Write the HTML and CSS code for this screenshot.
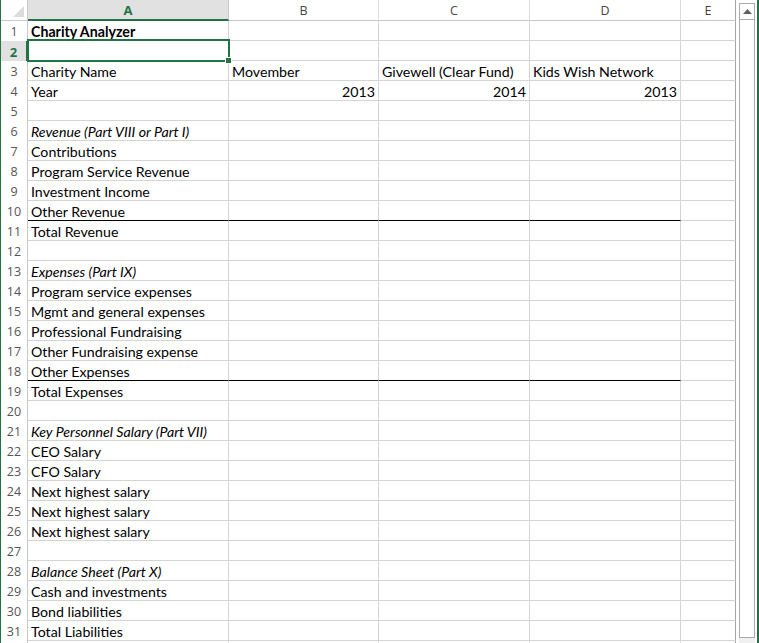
FILE: index.html
```html
<!DOCTYPE html>
<html>
<head>
<meta charset="utf-8">
<link rel="stylesheet" href="styles.css">
</head>
<body>
<div class="app">
  <div class="edge"></div>
  <div class="sheet">
    <div class="row head">
      <div class="corner"><svg width="26" height="20" viewBox="0 0 26 20"><polygon points="12,17 23,17 23,6" fill="#dcdcdc"/></svg></div>
      <div class="ch sel">A</div><div class="ch">B</div><div class="ch">C</div><div class="ch">D</div><div class="ch last">E</div>
    </div>
    <div class="row"><div class="rh">1</div><div class="c a bold">Charity Analyzer</div><div class="c"></div><div class="c"></div><div class="c"></div><div class="c last"></div></div>
    <div class="row"><div class="rh rsel">2</div><div class="c a"></div><div class="c"></div><div class="c"></div><div class="c"></div><div class="c last"></div></div>
    <div class="row"><div class="rh">3</div><div class="c a">Charity Name</div><div class="c">Movember</div><div class="c">Givewell (Clear Fund)</div><div class="c">Kids Wish Network</div><div class="c last"></div></div>
    <div class="row"><div class="rh">4</div><div class="c a">Year</div><div class="c num">2013</div><div class="c num">2014</div><div class="c num">2013</div><div class="c last"></div></div>
    <div class="row"><div class="rh">5</div><div class="c a"></div><div class="c"></div><div class="c"></div><div class="c"></div><div class="c last"></div></div>
    <div class="row"><div class="rh">6</div><div class="c a it">Revenue (Part VIII or Part I)</div><div class="c"></div><div class="c"></div><div class="c"></div><div class="c last"></div></div>
    <div class="row"><div class="rh">7</div><div class="c a">Contributions</div><div class="c"></div><div class="c"></div><div class="c"></div><div class="c last"></div></div>
    <div class="row"><div class="rh">8</div><div class="c a">Program Service Revenue</div><div class="c"></div><div class="c"></div><div class="c"></div><div class="c last"></div></div>
    <div class="row"><div class="rh">9</div><div class="c a">Investment Income</div><div class="c"></div><div class="c"></div><div class="c"></div><div class="c last"></div></div>
    <div class="row total"><div class="rh">10</div><div class="c a">Other Revenue</div><div class="c"></div><div class="c"></div><div class="c"></div><div class="c last"></div></div>
    <div class="row"><div class="rh">11</div><div class="c a">Total Revenue</div><div class="c"></div><div class="c"></div><div class="c"></div><div class="c last"></div></div>
    <div class="row"><div class="rh">12</div><div class="c a"></div><div class="c"></div><div class="c"></div><div class="c"></div><div class="c last"></div></div>
    <div class="row"><div class="rh">13</div><div class="c a it">Expenses (Part IX)</div><div class="c"></div><div class="c"></div><div class="c"></div><div class="c last"></div></div>
    <div class="row"><div class="rh">14</div><div class="c a">Program service expenses</div><div class="c"></div><div class="c"></div><div class="c"></div><div class="c last"></div></div>
    <div class="row"><div class="rh">15</div><div class="c a">Mgmt and general expenses</div><div class="c"></div><div class="c"></div><div class="c"></div><div class="c last"></div></div>
    <div class="row"><div class="rh">16</div><div class="c a">Professional Fundraising</div><div class="c"></div><div class="c"></div><div class="c"></div><div class="c last"></div></div>
    <div class="row"><div class="rh">17</div><div class="c a">Other Fundraising expense</div><div class="c"></div><div class="c"></div><div class="c"></div><div class="c last"></div></div>
    <div class="row total"><div class="rh">18</div><div class="c a">Other Expenses</div><div class="c"></div><div class="c"></div><div class="c"></div><div class="c last"></div></div>
    <div class="row"><div class="rh">19</div><div class="c a">Total Expenses</div><div class="c"></div><div class="c"></div><div class="c"></div><div class="c last"></div></div>
    <div class="row"><div class="rh">20</div><div class="c a"></div><div class="c"></div><div class="c"></div><div class="c"></div><div class="c last"></div></div>
    <div class="row"><div class="rh">21</div><div class="c a it">Key Personnel Salary (Part VII)</div><div class="c"></div><div class="c"></div><div class="c"></div><div class="c last"></div></div>
    <div class="row"><div class="rh">22</div><div class="c a">CEO Salary</div><div class="c"></div><div class="c"></div><div class="c"></div><div class="c last"></div></div>
    <div class="row"><div class="rh">23</div><div class="c a">CFO Salary</div><div class="c"></div><div class="c"></div><div class="c"></div><div class="c last"></div></div>
    <div class="row"><div class="rh">24</div><div class="c a">Next highest salary</div><div class="c"></div><div class="c"></div><div class="c"></div><div class="c last"></div></div>
    <div class="row"><div class="rh">25</div><div class="c a">Next highest salary</div><div class="c"></div><div class="c"></div><div class="c"></div><div class="c last"></div></div>
    <div class="row"><div class="rh">26</div><div class="c a">Next highest salary</div><div class="c"></div><div class="c"></div><div class="c"></div><div class="c last"></div></div>
    <div class="row"><div class="rh">27</div><div class="c a"></div><div class="c"></div><div class="c"></div><div class="c"></div><div class="c last"></div></div>
    <div class="row"><div class="rh">28</div><div class="c a it">Balance Sheet (Part X)</div><div class="c"></div><div class="c"></div><div class="c"></div><div class="c last"></div></div>
    <div class="row"><div class="rh">29</div><div class="c a">Cash and investments</div><div class="c"></div><div class="c"></div><div class="c"></div><div class="c last"></div></div>
    <div class="row"><div class="rh">30</div><div class="c a">Bond liabilities</div><div class="c"></div><div class="c"></div><div class="c"></div><div class="c last"></div></div>
    <div class="row"><div class="rh">31</div><div class="c a">Total Liabilities</div><div class="c"></div><div class="c"></div><div class="c"></div><div class="c last"></div></div>
    <div class="row"><div class="rh"></div><div class="c a"></div><div class="c"></div><div class="c"></div><div class="c"></div><div class="c last"></div></div>
    <div class="selection"><div class="handle"></div></div>
  </div>
  <div class="gap"></div>
  <div class="vscroll">
    <div class="track">
      <div class="up"><svg width="9" height="5" viewBox="0 0 9 5"><polygon points="0,5 9,5 4.5,0" fill="#606060"/></svg></div>
    </div>
    <div class="below"></div>
  </div>
  <div class="gap2"></div>
  <div class="edge-r"></div>
</div>
</body>
</html>
```

FILE: styles.css
```css
html, body {
  margin: 0;
  padding: 0;
  background: #ffffff;
  overflow: hidden;
}
.app {
  display: flex;
  width: 759px;
  height: 643px;
  overflow: hidden;
}
.edge {
  width: 1px;
  flex: none;
  background: #217346;
}
.sheet {
  position: relative;
  width: 735px;
  flex: none;
  height: 643px;
  overflow: hidden;
  font-family: "Lato", "Liberation Sans", sans-serif;
  font-size: 14.2px;
  color: #000;
}
.row {
  display: grid;
  grid-template-columns: 27px 201px 150px 151px 151px 55px;
  height: 20px;
}
.row.head {
  height: 21px;
}
.corner {
  box-sizing: border-box;
  border-right: 1px solid #c8c8c8;
  border-bottom: 1px solid #c8c8c8;
  height: 21px;
}
.corner svg {
  display: block;
}
.ch {
  box-sizing: border-box;
  height: 21px;
  border-right: 1px solid #dcdcdc;
  border-bottom: 1px solid #c8c8c8;
  font-family: "Open Sans", "Liberation Sans", sans-serif;
  font-size: 12.5px;
  color: #444;
  display: flex;
  align-items: center;
  justify-content: center;
  padding-top: 1px;
}
.ch.sel {
  background: #e1e1e1;
  color: #217346;
  font-weight: bold;
  font-size: 13px;
  border-bottom: 2px solid #217346;
  border-right-color: #c8c8c8;
}
.ch.last {
  border-right: 1px solid #a6a6a6;
}
.rh {
  box-sizing: border-box;
  height: 20px;
  border-right: 1px solid #c8c8c8;
  font-family: "Open Sans", "Liberation Sans", sans-serif;
  font-size: 12.5px;
  color: #555;
  display: flex;
  align-items: center;
  justify-content: center;
  padding-top: 1px;
}
.rh.rsel {
  background: #e1e1e1;
  color: #217346;
  font-weight: bold;
  font-size: 13px;
  border-right: 2px solid #217346;
}
.c {
  box-sizing: border-box;
  height: 20px;
  border-right: 1px solid #d4d4d4;
  border-bottom: 1px solid #d4d4d4;
  padding: 1px 3px 0 3px;
  white-space: nowrap;
  display: flex;
  align-items: center;
  overflow: visible;
  line-height: 19px;
}
.c.last {
  border-right: 1px solid #a6a6a6;
}
.c.num {
  justify-content: flex-end;
}
.c.bold {
  font-weight: bold;
}
.c.it {
  font-style: italic;
}
.row.total .c {
  border-bottom-color: #000;
}
.row.total .c.last {
  border-bottom-color: #d4d4d4;
}
.selection {
  position: absolute;
  left: 26px;
  top: 39px;
  width: 203px;
  height: 23px;
  box-sizing: border-box;
  border: 2px solid #217346;
}
.handle {
  position: absolute;
  right: -4px;
  bottom: -4px;
  width: 5px;
  height: 5px;
  background: #217346;
  border: 1px solid #fff;
}
.gap {
  width: 3px;
  flex: none;
}
.vscroll {
  width: 16px;
  flex: none;
  display: flex;
  flex-direction: column;
  padding-top: 3px;
  box-sizing: border-box;
}
.track {
  flex: none;
  height: 635px;
  box-sizing: border-box;
  border: 1px solid #ababab;
  background: #fff;
}
.up {
  height: 15px;
  border-bottom: 1px solid #ababab;
  display: flex;
  align-items: center;
  justify-content: center;
}
.up svg {
  display: block;
}
.below {
  flex: 1;
  background: #f0f0f0;
}
.gap2 {
  width: 2px;
  flex: none;
}
.edge-r {
  width: 2px;
  flex: none;
  background: #217346;
}
```
